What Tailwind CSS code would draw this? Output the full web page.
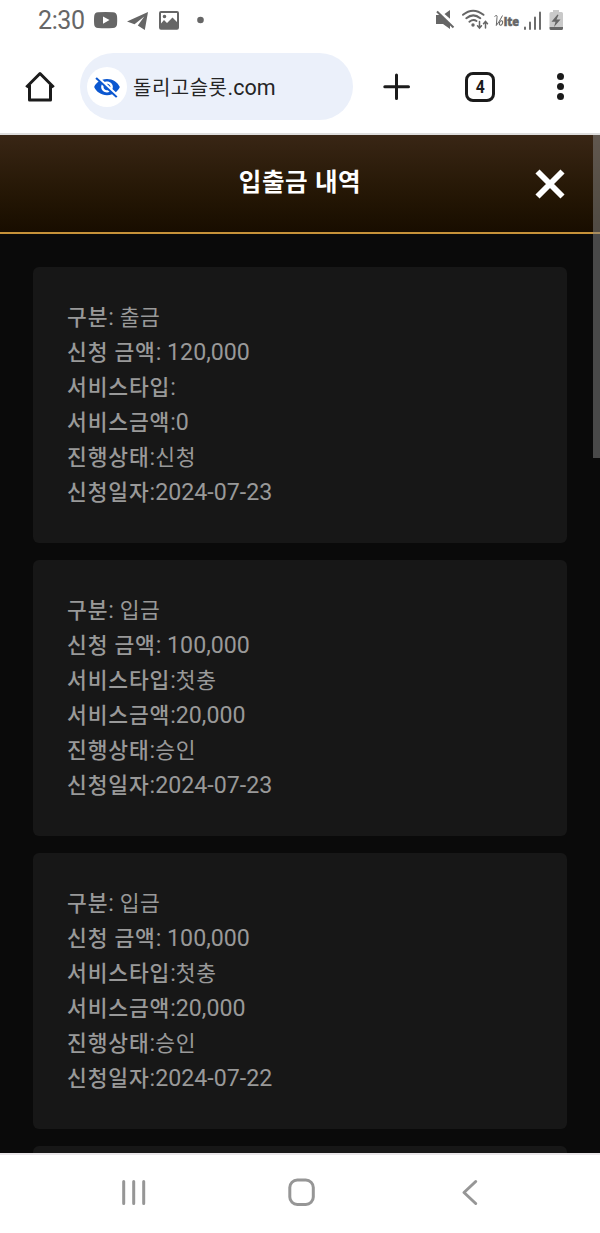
<!DOCTYPE html>
<html lang="ko">
<head>
<meta charset="utf-8">
<meta name="viewport" content="width=device-width">
<title>입출금 내역</title>
<script src="https://cdn.jsdelivr.net/npm/@tailwindcss/browser@4"></script>
</head>
<body class="flex h-[1233px] w-[600px] flex-col overflow-hidden bg-white font-[Roboto,'Noto_Sans_CJK_KR',sans-serif]">
<!-- Status bar -->
<div class="flex h-[40px] shrink-0 items-center pl-[38px] text-[#666]">
  <span class="w-[56px] pt-[2px] text-[25px] leading-[40px] tracking-[-0.4px]">2:30</span>
  <svg class="h-[40px] w-[116px]" viewBox="94 0 116 40" fill="#666">
    <path fill-rule="evenodd" d="M98 12.3Q105.500 11.700 113 12.300Q116.500 12.500 117 16Q117.400 20 117 24.500Q116.500 27.700 113 28Q105.500 28.500 98 28Q94.500 27.700 94.200 24.500Q93.800 20 94.200 16Q94.500 12.500 98 12.300ZM103 16.500V23.700L109.500 20.100Z"/>
    <path d="M127 21.500L148 12L144.800 30L137.800 25.500L144.300 16.500L134.500 24.300Z"/>
    <path fill-rule="evenodd" d="M161 11H177Q179 11 179 13V27.500Q179 29.700 177 29.700H161Q159 29.700 159 27.500V13Q159 11 161 11ZM161 13V23.500L164 20L167 23L172.500 17.500L177 22V13ZM162.700 16.500A1.800 1.800 0 1 0 166.300 16.500A1.800 1.800 0 1 0 162.700 16.500Z"/>
    <circle cx="200.500" cy="20" r="3.300"/>
  </svg>
  <svg class="ml-[224px] h-[40px] w-[132px]" viewBox="434 0 132 40" fill="#666">
    <path d="M436 15H441L450 23.500V29L443 24H436ZM444.500 14L450 10V18.800Z"/>
    <path d="M437 11.500L453.500 27.500" stroke="#666" stroke-width="2"/>
    <g fill="none" stroke="#666" stroke-width="2" stroke-linecap="round">
      <path d="M463 14.800Q473 6.700 483.500 14.800M466.300 18.200Q473.300 12.600 480.300 18.200M469.400 21.700Q473.300 18.700 476.500 21"/>
      <path d="M479.500 21.500V27.800M477.500 25.700L479.500 28L481.500 25.700M485.500 28V21.500M483.500 23.700L485.500 21.300L487.500 23.700" stroke-width="1.500"/>
    </g>
    <circle cx="473" cy="25" r="1.700"/>
    <g fill="none" stroke="#666" stroke-width="1"><path d="M494.500 16.500Q497.500 14 497 17.500L496.300 25.500Q499.500 21.500 502.500 15.500"/><ellipse cx="501" cy="23" rx="1.500" ry="2.300" transform="rotate(20 501 23)"/></g>
    <text x="503.700" y="26.200" font-family="Open Sans" font-size="13" font-weight="800" textLength="15.500" lengthAdjust="spacingAndGlyphs" stroke="#666" stroke-width=".5">lte</text>
    <g stroke="#666" stroke-width="1.900" stroke-linecap="round"><path d="M525 27.500V29M530 22.500V29M535 17.500V29M540 12.500V29"/></g>
    <path d="M553 10H559V12H561.500Q563 12 563 13.500V27H549.500V13.500Q549.500 12 551 12H553Z" fill="#c9c9c9"/>
    <path d="M549.500 27H563V28.500Q563 30 561.500 30H551Q549.500 30 549.500 28.500ZM557.500 14.500L551.500 21.700H555.500L554 27L560.500 19.500H556.500L558.500 15Z"/>
  </svg>
</div>
<!-- Browser toolbar -->
<div class="flex h-[95px] shrink-0 items-center border-b-2 border-[#dedede]">
  <svg class="ml-[24px] h-[32px] w-[32px]" viewBox="24 71 32 32" fill="none" stroke="#1b1b1b" stroke-width="3"><path d="M26.300 87.300L40 73.500L53.700 87.300M29.500 85V100H50.500V85" stroke-linejoin="round"/></svg>
  <div class="ml-[24px] flex h-[67px] w-[273px] items-center rounded-full bg-[#ebf0fa] pl-[7px]">
    <div class="flex size-[40px] items-center justify-center rounded-full bg-white">
      <svg class="h-[26px] w-[28px]" viewBox="0 0 24 24" fill="#0b57d0" preserveAspectRatio="none"><path d="M12 7c2.760 0 5 2.240 5 5 0 .650-.130 1.260-.360 1.830l2.920 2.920c1.510-1.260 2.700-2.890 3.430-4.750-1.730-4.390-6-7.500-11-7.500-1.400 0-2.740.250-3.980.700l2.160 2.160C10.740 7.130 11.350 7 12 7zM2 4.270l2.280 2.280.460.460C3.080 8.300 1.780 10.020 1 12c1.730 4.390 6 7.500 11 7.500 1.550 0 3.030-.300 4.380-.840l.420.420L19.730 22 21 20.730 3.270 3 2 4.270zM7.530 9.800l1.550 1.550c-.050.210-.080.430-.080.650 0 1.660 1.340 3 3 3 .220 0 .440-.030.650-.080l1.550 1.550c-.670.330-1.410.530-2.200.530-2.760 0-5-2.240-5-5 0-.790.200-1.530.530-2.200zm4.310-.780l3.150 3.150.020-.160c0-1.660-1.340-3-3-3l-.170.010z"/></svg>
    </div>
    <span class="ml-[6px] pt-[2px] whitespace-nowrap text-[21.500px] leading-[30px] text-[#252525]"><span class="text-[20px] tracking-[0.5px]">돌리고슬롯</span>.com</span>
  </div>
  <svg class="ml-[30px] h-[28px] w-[28px]" viewBox="0 0 28 28" stroke="#1b1b1b" stroke-width="3" stroke-linecap="round"><path d="M13.500 2V25.500M1.800 13.700H25.500"/></svg>
  <div class="ml-[54px] flex size-[30px] items-center justify-center rounded-[8px] border-[3px] border-[#1b1b1b] text-[18.500px] leading-none font-bold text-[#1b1b1b]"><span class="scale-x-[0.85] pt-px">4</span></div>
  <div class="ml-[61.500px] flex flex-col gap-[3px]"><i class="size-[7px] rounded-full bg-[#1b1b1b]"></i><i class="size-[7px] rounded-full bg-[#1b1b1b]"></i><i class="size-[7px] rounded-full bg-[#1b1b1b]"></i></div>
</div>
<!-- Page -->
<div class="relative h-[1018px] shrink-0 overflow-hidden bg-[#0a0a0a]">
  <div class="relative flex h-[99px] items-center justify-center border-b-2 border-[#c69239] bg-linear-to-b from-[#392615] to-[#180d00] pb-px">
    <h1 class="text-[24.500px] leading-[36px] font-bold tracking-[0.6px] text-white">입출금 내역</h1>
    <svg class="absolute top-[33px] left-[534px] size-[32px]" viewBox="0 0 32 32" stroke="#fff" stroke-width="5.800"><path d="M3.500 3.500L28.500 28.500M28.500 3.500L3.500 28.500"/></svg>
  </div>
  <div class="flex flex-col gap-[17px] px-[33px] pt-[33px] text-[23.200px] leading-[35px] text-[#999] [&_b]:text-[21.500px] [&_b]:font-medium [&_b]:tracking-[0.85px] [&_i]:text-[21.500px] [&_i]:tracking-[0.7px] [&_i]:not-italic [&_p]:h-[35px] [&_p]:whitespace-nowrap [&_section]:h-[276.100px] [&_section]:shrink-0 [&_section]:rounded-[6px] [&_section]:bg-[#171717] [&_section]:px-[34px] [&_section]:pt-[33px]">
    <section>
      <p><b>구분</b>: <i>출금</i></p>
      <p><b>신청 금액</b>: 120,000</p>
      <p><b>서비스타입</b>:</p>
      <p><b>서비스금액</b>:0</p>
      <p><b>진행상태</b>:<i>신청</i></p>
      <p><b>신청일자</b>:2024-07-23</p>
    </section>
    <section>
      <p><b>구분</b>: <i>입금</i></p>
      <p><b>신청 금액</b>: 100,000</p>
      <p><b>서비스타입</b>:<i>첫충</i></p>
      <p><b>서비스금액</b>:20,000</p>
      <p><b>진행상태</b>:<i>승인</i></p>
      <p><b>신청일자</b>:2024-07-23</p>
    </section>
    <section>
      <p><b>구분</b>: <i>입금</i></p>
      <p><b>신청 금액</b>: 100,000</p>
      <p><b>서비스타입</b>:<i>첫충</i></p>
      <p><b>서비스금액</b>:20,000</p>
      <p><b>진행상태</b>:<i>승인</i></p>
      <p><b>신청일자</b>:2024-07-22</p>
    </section>
    <section></section>
  </div>
  <div class="absolute top-0 right-0 h-[323px] w-[7px] bg-[#888]/50"></div>
</div>
<!-- Navigation bar -->
<div class="flex h-[80px] shrink-0 items-center border-t-2 border-[#e9e6e9]">
  <svg class="h-[78px] w-[600px]" viewBox="0 1155 600 78" fill="none" stroke="#969696" stroke-width="3" stroke-linecap="round" stroke-linejoin="round">
    <path d="M123.700 1181.500V1203.500M133.700 1181.500V1203.500M143.700 1181.500V1203.500"/>
    <rect x="289.800" y="1180" width="23.500" height="24.500" rx="7.500"/>
    <path d="M475.700 1181.500L464 1192.500L475.700 1203.500"/>
  </svg>
</div>
</body>
</html>
